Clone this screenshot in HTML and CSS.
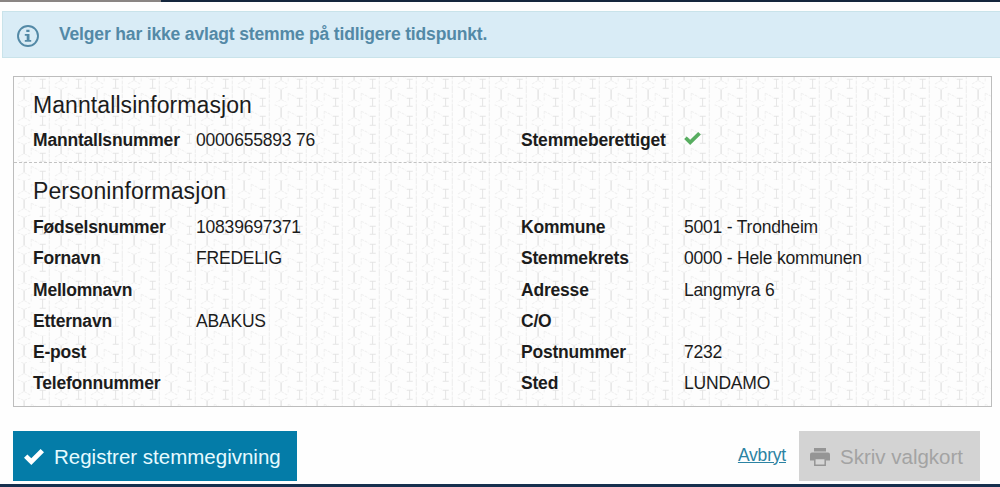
FILE: index.html
```html
<!DOCTYPE html>
<html lang="no">
<head>
    <meta charset="UTF-8">
    <meta name="viewport" content="width=device-width, initial-scale=1.0">
    <title>Registrer stemmegivning</title>
    <link rel="stylesheet" href="styles.css">
</head>
<body>
    <div class="topline"></div>
    <div class="alert">
        <svg class="info" viewBox="0 0 24 24">
            <circle cx="12" cy="12" r="10" fill="none" stroke="currentColor" stroke-width="1.9"/>
            <path d="M10.3 5.7h3.2v2.4h-3.2zM8.8 10h4.7v6h1.7v1.8H8.8V16h1.9v-4.2H8.8z" fill="currentColor"/>
        </svg>
        <span>Velger har ikke avlagt stemme på tidligere tidspunkt.</span>
    </div>
    <div class="panel">
        <div class="section roll">
            <h2>Manntallsinformasjon</h2>
            <div class="cols">
                <dl>
                    <dt>Manntallsnummer</dt><dd>0000655893 76</dd>
                </dl>
                <dl>
                    <dt>Stemmeberettiget</dt>
                    <dd><svg class="ok" viewBox="0 0 18 14"><path d="M0 7.6l2.8-2.8 3.7 3.6L15.1 0 18 2.8 6.5 14z" fill="currentColor"/></svg></dd>
                </dl>
            </div>
        </div>
        <div class="section person">
            <h2>Personinformasjon</h2>
            <div class="cols">
                <dl>
                    <dt>Fødselsnummer</dt><dd>10839697371</dd>
                    <dt>Fornavn</dt><dd>FREDELIG</dd>
                    <dt>Mellomnavn</dt><dd></dd>
                    <dt>Etternavn</dt><dd>ABAKUS</dd>
                    <dt>E-post</dt><dd></dd>
                    <dt>Telefonnummer</dt><dd></dd>
                </dl>
                <dl>
                    <dt>Kommune</dt><dd>5001 - Trondheim</dd>
                    <dt>Stemmekrets</dt><dd>0000 - Hele kommunen</dd>
                    <dt>Adresse</dt><dd>Langmyra 6</dd>
                    <dt>C/O</dt><dd></dd>
                    <dt>Postnummer</dt><dd>7232</dd>
                    <dt>Sted</dt><dd>LUNDAMO</dd>
                </dl>
            </div>
        </div>
    </div>
    <div class="actions">
        <button class="btn primary">
            <svg class="check" viewBox="0 0 20 16"><path d="M0 8.8l3.4-3.4 3.9 3.8L16.6 0 20 3.3 7.3 16z" fill="currentColor"/></svg>
            <span>Registrer stemmegivning</span>
        </button>
        <a class="cancel" href="#">Avbryt</a>
        <button class="btn print" disabled>
            <svg class="printer" viewBox="0 0 20 18">
                <path d="M4 0h12v3.4H4zM2 4.6h16a2 2 0 0 1 2 2v6h-4V10H4v2.6H0v-6a2 2 0 0 1 2-2z" fill="currentColor"/>
                <path d="M4.8 10.4h10.4v6.8H4.8z" fill="#d6d6d6" stroke="currentColor" stroke-width="1.5"/>
            </svg>
            <span>Skriv valgkort</span>
        </button>
    </div>
    <div class="bottomline"></div>
</body>
</html>
```
FILE: styles.css
```css
* {margin: 0; padding: 0; box-sizing: border-box;}
body {
    height: 487px;
    overflow: hidden;
    display: flex;
    flex-direction: column;
    background: #fefefe;
    color: #1c1c1c;
    font-family: "Liberation Sans", Arial, sans-serif;
    font-size: 17.5px;
}
svg {display: block; flex: none;}
.topline {
    height: 2px;
    flex: none;
    background: linear-gradient(to right, #8a8583 161px, #14263d 161px);
}
.alert {
    height: 47px;
    flex: none;
    margin: 9px 0 0 2px;
    padding-left: 13px;
    display: flex;
    align-items: center;
    background: #d9ecf6;
    border: 1px solid #c9e3ea;
    border-right: 0;
    color: #5389a6;
    font-weight: bold;
    letter-spacing: -0.16px;
}
.info {width: 24px; height: 24px; margin: 3px 19px 0 0;}
.panel {
    width: 979px;
    height: 331px;
    flex: none;
    margin: 18px 0 0 13px;
    border: 1px solid #bdbdbd;
    background-color: #fdfdfd;
    background-image: url("data:image/svg+xml,%3Csvg xmlns='http://www.w3.org/2000/svg' width='36.7' height='18.3'%3E%3Cg fill='none' stroke='%23f0f0f0'%3E%3Cpath d='M10 .5v9.500' stroke='%23d9d9d9'/%3E%3Cpath d='M28.400 9v8.500M25.500 9h6M25.500 17.500h6' stroke='%23e4e4e4'/%3E%3Cpath d='M35 0v18.300' stroke='%23ececec' stroke-dasharray='4 1'/%3E%3Cpath d='M10 10l-7 4M10 10l7 4M10 .5l-7-3M10 .5l7-3M10 18.800l-7-3M10 18.800l7-3M17 4l8 4M17 4v7' stroke-dasharray='3 1'/%3E%3C/g%3E%3C/svg%3E");
    background-position: 0 12px;
}
.section {padding: 0 19px;}
.roll {
    height: 86px;
    padding-top: 14px;
    border-bottom: 1px dashed #c2c2c2;
}
.person {padding-top: 14px;}
h2 {
    height: 28px;
    line-height: 28px;
    font-size: 23px;
    font-weight: normal;
    letter-spacing: 0.08px;
}
.roll dl {line-height: 42px;}
.person dl {
    margin-top: 7px;
    grid-auto-rows: 31.3px;
    line-height: 31px;
}
.cols {
    display: grid;
    grid-template-columns: 488px 1fr;
}
dl {
    display: grid;
    grid-template-columns: 163px 1fr;
    letter-spacing: -0.2px;
}
dt {font-weight: bold;}
.ok {
    width: 17px;
    height: 13px;
    margin-top: 13px;
    color: #57ad60;
}
.actions {
    height: 50px;
    flex: none;
    margin: 24px 20px 0 13px;
    display: flex;
    align-items: center;
}
.btn {
    height: 50px;
    border: 0;
    padding-top: 2px;
    display: flex;
    align-items: center;
    font-family: inherit;
    font-size: 20.5px;
}
.primary {
    width: 284px;
    padding-left: 11px;
    background: #047ca8;
    color: #e6faff;
}
.check {width: 20px; height: 16px; margin-right: 10px; color: #fff;}
.cancel {
    margin: -2px 13px 0 auto;
    letter-spacing: -0.2px;
    color: #2c83a3;
}
.print {
    width: 181px;
    padding-left: 11px;
    background: #d3d3d3;
    color: #a3a3a3;
}
.printer {width: 20px; height: 18px; margin-right: 10px; color: #959595;}
.bottomline {
    height: 3px;
    flex: none;
    margin-top: auto;
    background: #16304e;
}
```
